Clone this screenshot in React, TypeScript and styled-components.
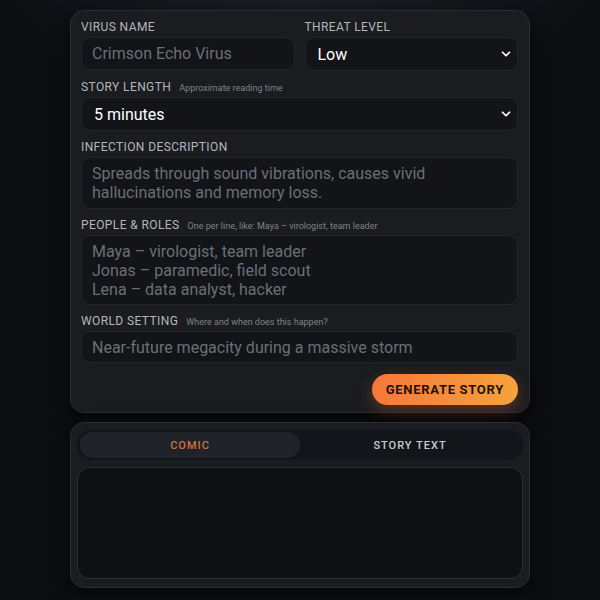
import React, { useState } from "react";
import styled, { createGlobalStyle } from "styled-components";
import { ChevronDown } from "lucide-react";

const GlobalStyle = createGlobalStyle`
  html, body {
    margin: 0;
    padding: 0;
    background: #0b0d10;
  }
  body {
    min-height: 600px;
    font-family: Roboto, "Liberation Sans", sans-serif;
    background: radial-gradient(ellipse 320px 120px at 50% -20px, #1c2128 0%, #0b0d10 100%);
  }
  * {
    box-sizing: border-box;
  }
`;

const Page = styled.div`
  width: 460px;
  margin: 0 auto;
  padding: 10px 0 12px;
  display: flex;
  flex-direction: column;
  gap: 9px;
`;

const Card = styled.div`
  background: #1a1c20;
  border: 1px solid #2a2d33;
  border-radius: 14px;
  box-shadow: 0 6px 18px rgba(0, 0, 0, 0.55);
`;

const Form = styled(Card)`
  padding: 9px 11px 7px 10px;
  display: flex;
  flex-direction: column;
  gap: 9px;
`;

const Row = styled.div`
  display: grid;
  grid-template-columns: 1fr 1fr;
  gap: 10px;
`;

const Field = styled.div`
  display: flex;
  flex-direction: column;
  gap: 3px;
`;

const LabelLine = styled.div`
  display: flex;
  align-items: baseline;
  gap: 8px;
  height: 14px;
  line-height: 14px;
`;

const Label = styled.label`
  font-size: 12px;
  letter-spacing: 0.4px;
  text-transform: uppercase;
  color: #b3b7bd;
`;

const Hint = styled.span`
  font-size: 9px;
  color: #7e838a;
`;

const inputBase = `
  display: block;
  width: 100%;
  margin: 0;
  background: #121418;
  border: 1px solid #23262b;
  border-radius: 9px;
  font-family: Roboto, "Liberation Sans", sans-serif;
  font-size: 16px;
  color: #e8eaed;
  outline: none;
  &::placeholder {
    color: #6a6f77;
  }
`;

const Input = styled.input<{ $h: number }>`
  ${inputBase}
  height: ${(p) => p.$h}px;
  padding: 0 10px;
`;

const TextArea = styled.textarea<{ $h: number }>`
  ${inputBase}
  resize: none;
  line-height: 19px;
  padding: 6px 10px;
  height: ${(p) => p.$h}px;
  overflow: hidden;
`;

const SelectWrap = styled.div`
  position: relative;
`;

const Select = styled.select<{ $h: number }>`
  ${inputBase}
  appearance: none;
  height: ${(p) => p.$h}px;
  padding: 0 12px;
  color: #ffffff;
  cursor: pointer;
`;

const Chevron = styled(ChevronDown)`
  position: absolute;
  right: 5px;
  top: 50%;
  transform: translateY(-50%);
  color: #ffffff;
  pointer-events: none;
`;

const Actions = styled.div`
  display: flex;
  justify-content: flex-end;
  padding-top: 2px;
`;

const GenerateButton = styled.button`
  height: 31px;
  padding: 0 14px;
  border: none;
  border-radius: 16px;
  background: linear-gradient(to right, #f7773a, #f6a23d);
  box-shadow: 0 6px 16px rgba(247, 120, 58, 0.28);
  color: #1c130d;
  font-family: Roboto, "Liberation Sans", sans-serif;
  font-weight: 700;
  font-size: 13px;
  letter-spacing: 0.7px;
  cursor: pointer;
`;

const Output = styled(Card)`
  padding: 7px 6px 8px;
  display: flex;
  flex-direction: column;
  gap: 7px;
`;

const Tabs = styled.div`
  display: grid;
  grid-template-columns: 1fr 1fr;
  background: #121519;
  border-radius: 14px;
  padding: 2px 3px;
  height: 30px;
`;

const Tab = styled.button<{ $active: boolean }>`
  border: none;
  border-radius: 13px;
  background: ${(p) => (p.$active ? "#20242a" : "transparent")};
  color: ${(p) => (p.$active ? "#d4703e" : "#c9ccd1")};
  font-family: Roboto, "Liberation Sans", sans-serif;
  font-size: 11px;
  font-weight: 500;
  letter-spacing: 1px;
  cursor: pointer;
`;

const Panel = styled.div`
  height: 112px;
  background: #0e1114;
  border: 1px solid #2b2f35;
  border-radius: 12px;
`;

const FieldHead = ({ label, hint }: { label: string; hint?: string }) => (
  <LabelLine>
    <Label>{label}</Label>
    {hint && <Hint>{hint}</Hint>}
  </LabelLine>
);

const App = () => {
  const [tab, setTab] = useState<"comic" | "text">("comic");

  return (
    <>
      <GlobalStyle />
      <Page>
        <Form>
          <Row>
            <Field>
              <FieldHead label="Virus name" />
              <Input $h={33} placeholder="Crimson Echo Virus" />
            </Field>
            <Field>
              <FieldHead label="Threat level" />
              <SelectWrap>
                <Select $h={34} defaultValue="Low">
                  <option>Low</option>
                  <option>Medium</option>
                  <option>High</option>
                </Select>
                <Chevron size={14} strokeWidth={3} />
              </SelectWrap>
            </Field>
          </Row>
          <Field>
            <FieldHead label="Story length" hint="Approximate reading time" />
            <SelectWrap>
              <Select $h={34} defaultValue="5 minutes">
                <option>3 minutes</option>
                <option>5 minutes</option>
                <option>10 minutes</option>
              </Select>
              <Chevron size={14} strokeWidth={3} />
            </SelectWrap>
          </Field>
          <Field>
            <FieldHead label="Infection description" />
            <TextArea
              $h={52}
              placeholder="Spreads through sound vibrations, causes vivid hallucinations and memory loss."
            />
          </Field>
          <Field>
            <FieldHead
              label="People & roles"
              hint="One per line, like: Maya – virologist, team leader"
            />
            <TextArea
              $h={70}
              placeholder={
                "Maya – virologist, team leader\nJonas – paramedic, field scout\nLena – data analyst, hacker"
              }
            />
          </Field>
          <Field>
            <FieldHead
              label="World setting"
              hint="Where and when does this happen?"
            />
            <Input
              $h={32}
              placeholder="Near-future megacity during a massive storm"
            />
          </Field>
          <Actions>
            <GenerateButton>GENERATE STORY</GenerateButton>
          </Actions>
        </Form>
        <Output>
          <Tabs>
            <Tab $active={tab === "comic"} onClick={() => setTab("comic")}>
              COMIC
            </Tab>
            <Tab $active={tab === "text"} onClick={() => setTab("text")}>
              STORY TEXT
            </Tab>
          </Tabs>
          <Panel />
        </Output>
      </Page>
    </>
  );
};

export default App;
